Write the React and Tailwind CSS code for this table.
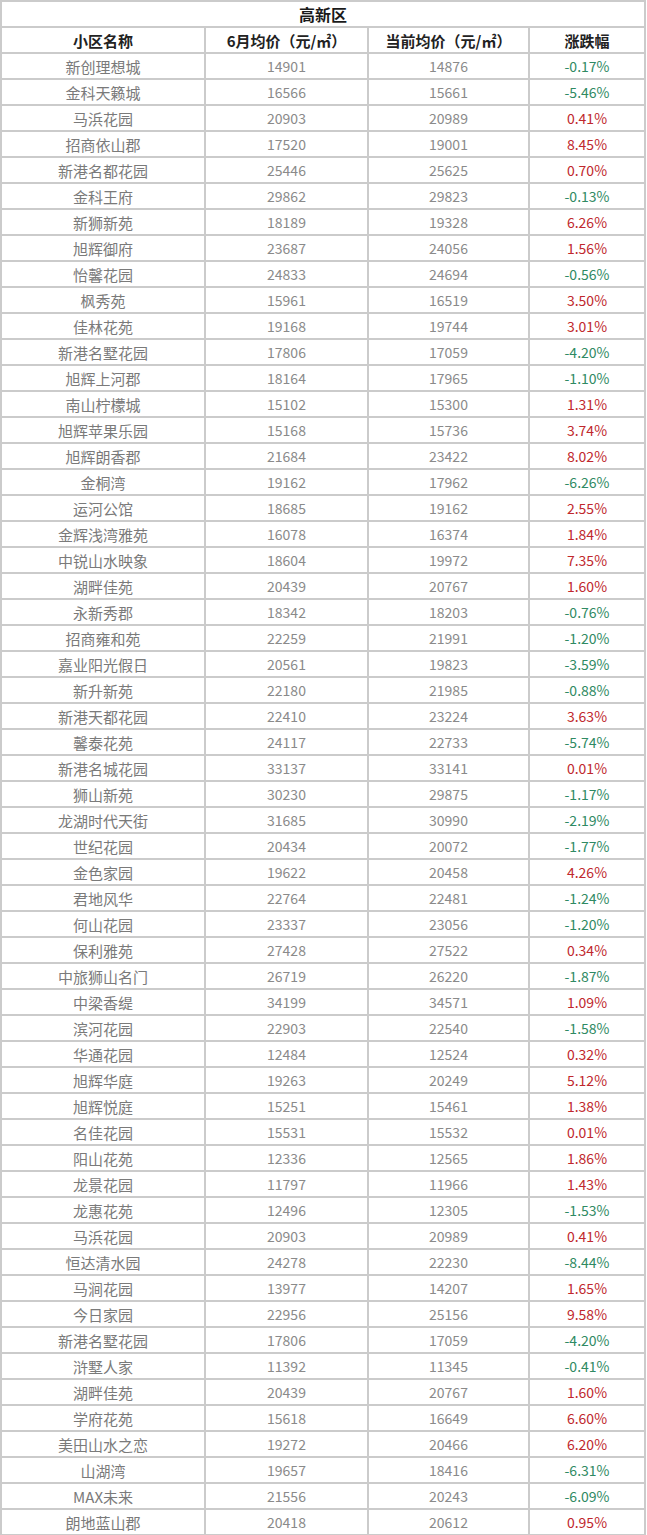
import React from "react";

const ROWS = [
  ["新创理想城", 14901, 14876, "-0.17%"],
  ["金科天籁城", 16566, 15661, "-5.46%"],
  ["马浜花园", 20903, 20989, "0.41%"],
  ["招商依山郡", 17520, 19001, "8.45%"],
  ["新港名都花园", 25446, 25625, "0.70%"],
  ["金科王府", 29862, 29823, "-0.13%"],
  ["新狮新苑", 18189, 19328, "6.26%"],
  ["旭辉御府", 23687, 24056, "1.56%"],
  ["怡馨花园", 24833, 24694, "-0.56%"],
  ["枫秀苑", 15961, 16519, "3.50%"],
  ["佳林花苑", 19168, 19744, "3.01%"],
  ["新港名墅花园", 17806, 17059, "-4.20%"],
  ["旭辉上河郡", 18164, 17965, "-1.10%"],
  ["南山柠檬城", 15102, 15300, "1.31%"],
  ["旭辉苹果乐园", 15168, 15736, "3.74%"],
  ["旭辉朗香郡", 21684, 23422, "8.02%"],
  ["金桐湾", 19162, 17962, "-6.26%"],
  ["运河公馆", 18685, 19162, "2.55%"],
  ["金辉浅湾雅苑", 16078, 16374, "1.84%"],
  ["中锐山水映象", 18604, 19972, "7.35%"],
  ["湖畔佳苑", 20439, 20767, "1.60%"],
  ["永新秀郡", 18342, 18203, "-0.76%"],
  ["招商雍和苑", 22259, 21991, "-1.20%"],
  ["嘉业阳光假日", 20561, 19823, "-3.59%"],
  ["新升新苑", 22180, 21985, "-0.88%"],
  ["新港天都花园", 22410, 23224, "3.63%"],
  ["馨泰花苑", 24117, 22733, "-5.74%"],
  ["新港名城花园", 33137, 33141, "0.01%"],
  ["狮山新苑", 30230, 29875, "-1.17%"],
  ["龙湖时代天街", 31685, 30990, "-2.19%"],
  ["世纪花园", 20434, 20072, "-1.77%"],
  ["金色家园", 19622, 20458, "4.26%"],
  ["君地风华", 22764, 22481, "-1.24%"],
  ["何山花园", 23337, 23056, "-1.20%"],
  ["保利雅苑", 27428, 27522, "0.34%"],
  ["中旅狮山名门", 26719, 26220, "-1.87%"],
  ["中梁香缇", 34199, 34571, "1.09%"],
  ["滨河花园", 22903, 22540, "-1.58%"],
  ["华通花园", 12484, 12524, "0.32%"],
  ["旭辉华庭", 19263, 20249, "5.12%"],
  ["旭辉悦庭", 15251, 15461, "1.38%"],
  ["名佳花园", 15531, 15532, "0.01%"],
  ["阳山花苑", 12336, 12565, "1.86%"],
  ["龙景花园", 11797, 11966, "1.43%"],
  ["龙惠花苑", 12496, 12305, "-1.53%"],
  ["马浜花园", 20903, 20989, "0.41%"],
  ["恒达清水园", 24278, 22230, "-8.44%"],
  ["马涧花园", 13977, 14207, "1.65%"],
  ["今日家园", 22956, 25156, "9.58%"],
  ["新港名墅花园", 17806, 17059, "-4.20%"],
  ["浒墅人家", 11392, 11345, "-0.41%"],
  ["湖畔佳苑", 20439, 20767, "1.60%"],
  ["学府花苑", 15618, 16649, "6.60%"],
  ["美田山水之恋", 19272, 20466, "6.20%"],
  ["山湖湾", 19657, 18416, "-6.31%"],
  ["MAX未来", 21556, 20243, "-6.09%"],
  ["朗地蓝山郡", 20418, 20612, "0.95%"],
];

// cell = white box sitting on the grey grid background, the 2px gap is the rule line
const cell = "bg-white h-[24px] flex items-center justify-center";

export default function App() {
  return (
    <div className="w-[647px] bg-white font-['Noto_Sans_CJK_SC','Noto_Sans',sans-serif] text-[15px] leading-none">
      <div className="w-[646px] grid grid-cols-[202px_161px_159px_114px] gap-[2px] bg-[#cbcbcb] border-2 border-[#cbcbcb]">
        <div className={`${cell} col-span-4 font-bold text-[16px] text-[#1a1a1a]`}>高新区</div>

        <div className={`${cell} font-bold text-[#222]`}>小区名称</div>
        <div className={`${cell} font-bold text-[#222]`}>6月均价（元/㎡）</div>
        <div className={`${cell} font-bold text-[#222]`}>当前均价（元/㎡）</div>
        <div className={`${cell} font-bold text-[#222]`}>涨跌幅</div>

        {ROWS.map(([name, june, now, pct], i) => {
          const down = pct.startsWith("-");
          return (
            <React.Fragment key={i}>
              <div className={`${cell} text-[#7a7a7a]`}>{name}</div>
              <div className={`${cell} text-[#8a8a8a] text-[14px]`}>{june}</div>
              <div className={`${cell} text-[#8a8a8a] text-[14px]`}>{now}</div>
              <div className={`${cell} text-[14px] ${down ? "text-[#2f8a63]" : "text-[#c0282d]"}`}>{pct}</div>
            </React.Fragment>
          );
        })}
      </div>
    </div>
  );
}
